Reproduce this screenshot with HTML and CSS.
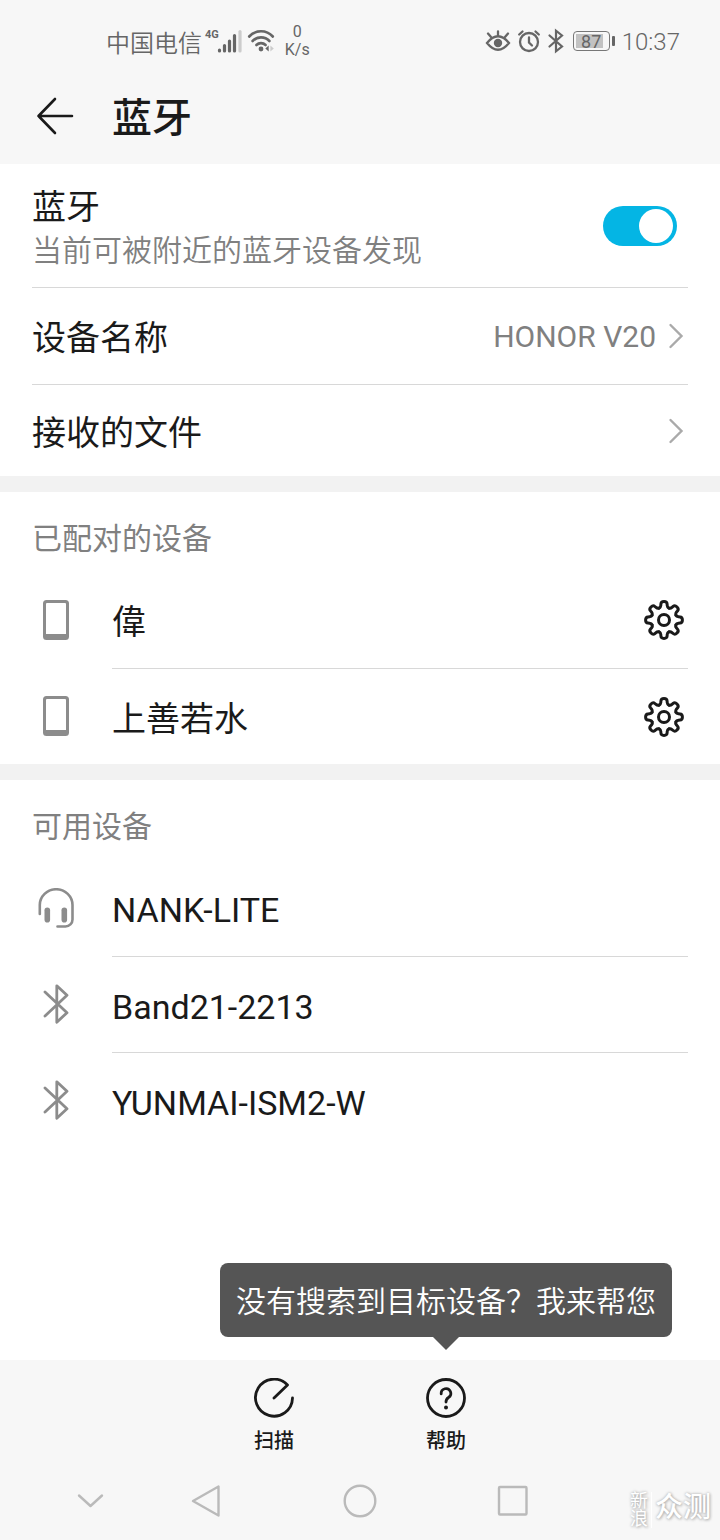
FILE: index.html
```html
<!DOCTYPE html>
<html lang="zh-CN">
<head>
<meta charset="utf-8">
<meta name="viewport" content="width=device-width, initial-scale=1">
<title>蓝牙</title>
<link rel="stylesheet" href="styles.css">
</head>
<body>
<svg class="sprite" aria-hidden="true">
  <defs>
    <path id="tooth" d="M-4.9 -11.9C-3.8 -12.35 -3.3 -13.2 -3.2 -14.5L-3.1 -16C-3 -17.8 -2 -18.4 0 -18.4S3 -17.8 3.1 -16L3.2 -14.5C3.3 -13.2 3.8 -12.35 4.9 -11.9"/>
    <symbol id="gear" viewBox="-20 -20 40 40">
      <g fill="none" stroke="currentColor" stroke-width="3" stroke-linecap="round">
        <use href="#tooth"/>
        <use href="#tooth" transform="rotate(45)"/>
        <use href="#tooth" transform="rotate(90)"/>
        <use href="#tooth" transform="rotate(135)"/>
        <use href="#tooth" transform="rotate(180)"/>
        <use href="#tooth" transform="rotate(225)"/>
        <use href="#tooth" transform="rotate(270)"/>
        <use href="#tooth" transform="rotate(315)"/>
        <circle r="5.5"/>
      </g>
    </symbol>
    <symbol id="phone" viewBox="0 0 40 40">
      <path fill="currentColor" fill-rule="evenodd" d="M10.5 0h19a3.5 3.5 0 0 1 3.5 3.5v33a3.5 3.5 0 0 1-3.5 3.5h-19a3.5 3.5 0 0 1-3.5-3.5v-33a3.5 3.5 0 0 1 3.5-3.5zM11 3a1 1 0 0 0-1 1v30h20V4a1 1 0 0 0-1-1z"/>
    </symbol>
    <symbol id="bluetooth" viewBox="0 0 40 40">
      <path fill="none" stroke="currentColor" stroke-width="2.8" stroke-linecap="round" stroke-linejoin="round" d="M9 8L31 28.7L20.8 38.2V1.800L31 11.3L9 32"/>
    </symbol>
    <symbol id="headset" viewBox="0 0 40 40">
      <path fill="none" stroke="currentColor" stroke-width="2.6" stroke-linecap="round" d="M3.8 26V17A16.3 15.7 0 0 1 36.5 17V31.5A7 7 0 0 1 29.5 38.5H21.5"/>
      <rect x="8.5" y="19.5" width="5.6" height="15" rx="2.8" fill="currentColor"/>
      <rect x="25.5" y="19.5" width="5.6" height="15" rx="2.8" fill="currentColor"/>
    </symbol>
    <symbol id="chevron" viewBox="0 0 16 28">
      <path fill="none" stroke="currentColor" stroke-width="2.4" stroke-linecap="round" d="M2.5 3L13.5 14L2.5 25"/>
    </symbol>
  </defs>
</svg>

<div class="screen">
  <div class="statusbar">
    <div class="status-group">
      <span class="carrier">中国电信</span>
      <span class="network">4G</span>
      <svg class="signal" width="26" height="28" viewBox="12 0 26 28" aria-hidden="true">
        <g stroke-width="3.2" stroke-linecap="round"><path stroke="#666" d="M14.5 23.2v.8M19.5 18.6V24M24.5 14V24M29.5 8.5V24"/><path stroke="#ccc" d="M35 4.5V24"/></g>
      </svg>
      <svg class="wifi" width="28" height="28" viewBox="0 0 28 28" aria-hidden="true">
        <g fill="none" stroke="#666" stroke-width="2.6" stroke-linecap="round"><path d="M2.2 9.5A16 16 0 0 1 25.8 9.5"/><path d="M5.6 14A11.5 11.5 0 0 1 22.4 14"/><path d="M9.4 18A6.5 6.5 0 0 1 18.6 18"/></g>
        <circle cx="14" cy="22" r="2.4" fill="#666"/><path fill="#666" d="M18.3 21.5l3.4-3v6z"/><path fill="#ccc" d="M26.8 21.5l-3.4-3v6z"/>
      </svg>
      <span class="rate"><span>0</span><span>K/s</span></span>
    </div>
    <div class="status-group right">
      <svg width="26" height="26" viewBox="0 0 26 26" aria-hidden="true">
        <g fill="none" stroke="#666" stroke-width="2.3" stroke-linecap="round"><path d="M2 15Q13 1.500 24 15Q13 28.500 2 15zM13 7V3.500M6 9L3 5.500M20 9L23 5.500"/></g>
        <circle cx="13" cy="15" r="4.200" fill="#666"/>
      </svg>
      <svg width="24" height="26" viewBox="0 0 24 26" aria-hidden="true">
        <g fill="none" stroke="#666" stroke-width="2.300" stroke-linecap="round"><circle cx="12" cy="14" r="9"/><path d="M12 9.500V14.500L15 17.500M2.200 6.500L5.500 3.500M21.800 6.500L18.500 3.500"/></g>
      </svg>
      <svg width="18" height="26" viewBox="0 0 18 26" aria-hidden="true">
        <path fill="none" stroke="#666" stroke-width="2.200" stroke-linecap="round" d="M2.500 7.500L15 18.500L9 23.300V2.700L15 7.500L2.500 18.500"/>
      </svg>
      <span class="battery"><span>87</span></span>
      <span class="clock">10:37</span>
    </div>
  </div>

  <header class="appbar">
    <button class="back" type="button" aria-label="返回">
      <svg width="40" height="40" viewBox="0 0 40 40" aria-hidden="true"><path fill="none" stroke="currentColor" stroke-width="2.600" stroke-linecap="round" stroke-linejoin="round" d="M19 3L2.500 20L19 37M2.500 20H36"/></svg>
    </button>
    <h1>蓝牙</h1>
  </header>

  <main>
    <section class="settings">
      <div class="row row-toggle">
        <label class="toggle-text" for="bt"><span class="name">蓝牙</span><span class="hint">当前可被附近的蓝牙设备发现</span></label>
        <input class="switch" id="bt" type="checkbox" role="switch" checked>
      </div>
      <a class="row row-name" href="#name"><span class="name">设备名称</span><span class="value">HONOR V20</span><svg class="chevron" aria-hidden="true"><use href="#chevron"/></svg></a>
      <a class="row row-files" href="#files"><span class="name">接收的文件</span><svg class="chevron" aria-hidden="true"><use href="#chevron"/></svg></a>
    </section>

    <section class="devices">
      <h2>已配对的设备</h2>
      <ul>
        <li class="device"><svg class="icon" aria-hidden="true"><use href="#phone"/></svg><div class="device-body"><span class="name">偉</span><button class="gear" type="button" aria-label="偉 设置"><svg class="icon" aria-hidden="true"><use href="#gear"/></svg></button></div></li>
        <li class="device"><svg class="icon" aria-hidden="true"><use href="#phone"/></svg><div class="device-body"><span class="name">上善若水</span><button class="gear" type="button" aria-label="上善若水 设置"><svg class="icon" aria-hidden="true"><use href="#gear"/></svg></button></div></li>
      </ul>
    </section>

    <section class="devices">
      <h2>可用设备</h2>
      <ul>
        <li class="device"><svg class="icon" aria-hidden="true"><use href="#headset"/></svg><div class="device-body"><span class="name">NANK-LITE</span></div></li>
        <li class="device"><svg class="icon" aria-hidden="true"><use href="#bluetooth"/></svg><div class="device-body"><span class="name">Band21-2213</span></div></li>
        <li class="device"><svg class="icon" aria-hidden="true"><use href="#bluetooth"/></svg><div class="device-body"><span class="name">YUNMAI-ISM2-W</span></div></li>
      </ul>
    </section>
  </main>

  <footer>
    <div class="actions">
      <button class="action" type="button">
        <svg class="icon" viewBox="0 0 40 40" aria-hidden="true"><path fill="none" stroke="currentColor" stroke-width="2.800" stroke-linecap="round" stroke-linejoin="round" d="M20 20L33.500 7A18.500 18.500 0 1 0 38.500 20"/></svg>
        <span>扫描</span>
      </button>
      <div class="help">
        <div class="tooltip" role="tooltip" id="tip">没有搜索到目标设备？我来帮您</div>
        <button class="action" type="button" aria-describedby="tip">
          <svg class="icon" viewBox="0 0 40 40" aria-hidden="true"><circle cx="20" cy="20" r="18.500" fill="none" stroke="currentColor" stroke-width="2.800"/><path fill="none" stroke="currentColor" stroke-width="2.800" stroke-linecap="round" d="M15.200 15.800A4.800 4.800 0 1 1 22.500 19.500Q20 21 20 24"/><circle cx="20" cy="29.500" r="2" fill="currentColor"/></svg>
          <span>帮助</span>
        </button>
      </div>
    </div>
    <nav class="navbar" aria-label="系统导航">
      <button type="button" aria-label="收起"><svg width="34" height="34" viewBox="0 0 34 34"><path d="M6 11.500L17.500 22L29 11.500"/></svg></button>
      <button type="button" aria-label="返回"><svg width="34" height="34" viewBox="0 0 34 34"><path d="M3 17L28.500 2.500V31.500Z"/></svg></button>
      <button type="button" aria-label="主屏幕"><svg width="34" height="34" viewBox="0 0 34 34"><circle cx="17" cy="17" r="15.300"/></svg></button>
      <button type="button" aria-label="最近任务"><svg width="34" height="34" viewBox="0 0 34 34"><rect x="3" y="3" width="27.500" height="27.500" rx="1"/></svg></button>
    </nav>
  </footer>
  <div class="watermark"><span class="brand">新浪</span><span class="product">众测</span></div>
</div>
</body>
</html>
```
FILE: styles.css
```css
* { box-sizing: border-box; }

body {
  margin: 0;
  background: #fff;
  color: #1a1a1a;
  font-family: Roboto, "Noto Sans CJK SC", sans-serif;
}

h1, h2, ul { margin: 0; padding: 0; font-weight: 400; }
ul { list-style: none; }
a { color: inherit; text-decoration: none; }
svg { flex: none; }

button {
  display: flex;
  padding: 0;
  border: 0;
  background: none;
  color: inherit;
  font: inherit;
}

.sprite { position: absolute; width: 0; height: 0; }

.screen {
  position: relative;
  display: flex;
  flex-direction: column;
  min-height: 100vh;
}

/* Status bar */
.statusbar {
  display: flex;
  align-items: center;
  justify-content: space-between;
  height: 80px;
  padding: 2px 40px 0 106px;
  background: #f7f7f7;
  color: #666;
}
.status-group { display: flex; align-items: center; }
.status-group.right { gap: 6px; }
.carrier { font-size: 24px; font-weight: 350; }
.network { padding-bottom: 12px; margin-left: 3px; font-size: 11px; line-height: 12px; font-weight: 700; }
.signal { margin-left: -2px; }
.wifi { margin-left: 4px; }
.rate {
  display: flex;
  flex-direction: column;
  align-items: center;
  margin-left: 10px;
  font-size: 16px;
  line-height: 18px;
}
.battery {
  position: relative;
  display: flex;
  width: 37px;
  height: 20px;
  margin: 0 6px 0 2px;
  padding: 2px;
  border: 1px solid #777;
  border-radius: 4px;
}
.battery::after {
  content: "";
  position: absolute;
  top: 4px;
  right: -6px;
  width: 3px;
  height: 10px;
  border-radius: 1px;
  background: #666;
}
.battery span {
  width: 100%;
  background: linear-gradient(to right, #c2c2c2 87%, transparent 87%);
  font-size: 18px;
  line-height: 15px;
  text-align: center;
}
.clock { padding-top: 2px; font-size: 24px; line-height: 28px; font-weight: 300; }

/* Title */
.appbar {
  display: flex;
  align-items: center;
  gap: 36px;
  height: 84px;
  padding: 0 36px 12px;
  background: #f7f7f7;
}
.appbar h1 { padding-top: 6px; font-size: 40px; line-height: 56px; font-weight: 500; }

/* Settings rows */
.settings { padding: 0 32px; }
.row {
  display: flex;
  align-items: center;
  border-bottom: 1px solid #d8d8d8;
}
.row-toggle { justify-content: space-between; height: 124px; padding-right: 11px; }
.row-name { height: 97px; }
.row-files { height: 91px; border-bottom: 0; }
.name { padding-top: 4px; font-size: 34px; line-height: 44px; font-weight: 400; }
.toggle-text { display: flex; flex-direction: column; padding-top: 2px; }
.hint { color: #808080; font-size: 30px; line-height: 44px; font-weight: 350; }
.value { margin-left: auto; color: #808080; font-size: 30px; }
.chevron { width: 16px; height: 28px; margin: 0 4px 0 12px; color: #aaa; }
.row-files .chevron { margin-left: auto; }

.switch {
  appearance: none;
  display: flex;
  align-items: center;
  width: 74px;
  height: 40px;
  margin: 0;
  padding: 0 4px;
  border-radius: 20px;
  background: #bbb;
}
.switch::before {
  content: "";
  width: 34px;
  height: 34px;
  border-radius: 50%;
  background: #fff;
}
.switch:checked { justify-content: flex-end; background: #04b5e4; }

/* Device lists */
.devices { border-top: 16px solid #f2f2f2; }
.devices h2 {
  height: 80px;
  padding: 14px 32px 0;
  color: #808080;
  font-size: 30px;
  line-height: 66px;
}
.device { display: flex; align-items: center; gap: 36px; height: 96px; padding: 0 32px 0 36px; }
.icon { width: 40px; height: 40px; }
.device > .icon { color: #8c8c8c; }
.device-body {
  display: flex;
  flex: 1;
  align-items: center;
  justify-content: space-between;
  height: 100%;
  padding-right: 4px;
}
.device + .device .device-body { border-top: 1px solid #d8d8d8; }

/* Bottom area */
footer { margin-top: auto; background: #f7f7f7; }
.actions { display: flex; justify-content: center; height: 101px; }
.help { position: relative; }
.action {
  flex-direction: column;
  align-items: center;
  gap: 9px;
  width: 172px;
  padding-top: 18px;
  font-size: 20px;
  line-height: 28px;
  font-weight: 500;
}
.tooltip {
  position: absolute;
  bottom: 100%;
  left: 50%;
  margin-bottom: 23px;
  padding: 4px 16px 0;
  border-radius: 8px;
  background: #555;
  color: #fff;
  font-size: 30px;
  line-height: 70px;
  font-weight: 350;
  white-space: nowrap;
  transform: translateX(-50%);
}
.tooltip::after {
  content: "";
  position: absolute;
  top: 100%;
  left: 50%;
  margin-left: -13px;
  border: 13px solid transparent;
  border-top-color: #555;
  border-bottom: 0;
}
.navbar {
  display: grid;
  grid-template-columns: 50fr 80fr 153fr 153fr 153fr 131fr;
  height: 79px;
}
.navbar button { align-items: center; justify-content: center; }
.navbar button:first-child { grid-column: 2; }
.navbar svg {
  fill: none;
  stroke: #bababa;
  stroke-width: 2.4px;
  stroke-linecap: round;
  stroke-linejoin: round;
}

.watermark {
  position: absolute;
  right: 9px;
  bottom: 10px;
  display: flex;
  align-items: center;
  gap: 3px;
  color: #fff;
  text-shadow: 0 0 3px #aaa, 1px 1px 3px #bbb;
}
.brand {
  width: 22px;
  border-right: 1px solid #fff;
  font-size: 18px;
  line-height: 18px;
  word-break: break-all;
}
.product { padding-bottom: 4px; font-size: 28px; line-height: 36px; font-weight: 500; }
```
